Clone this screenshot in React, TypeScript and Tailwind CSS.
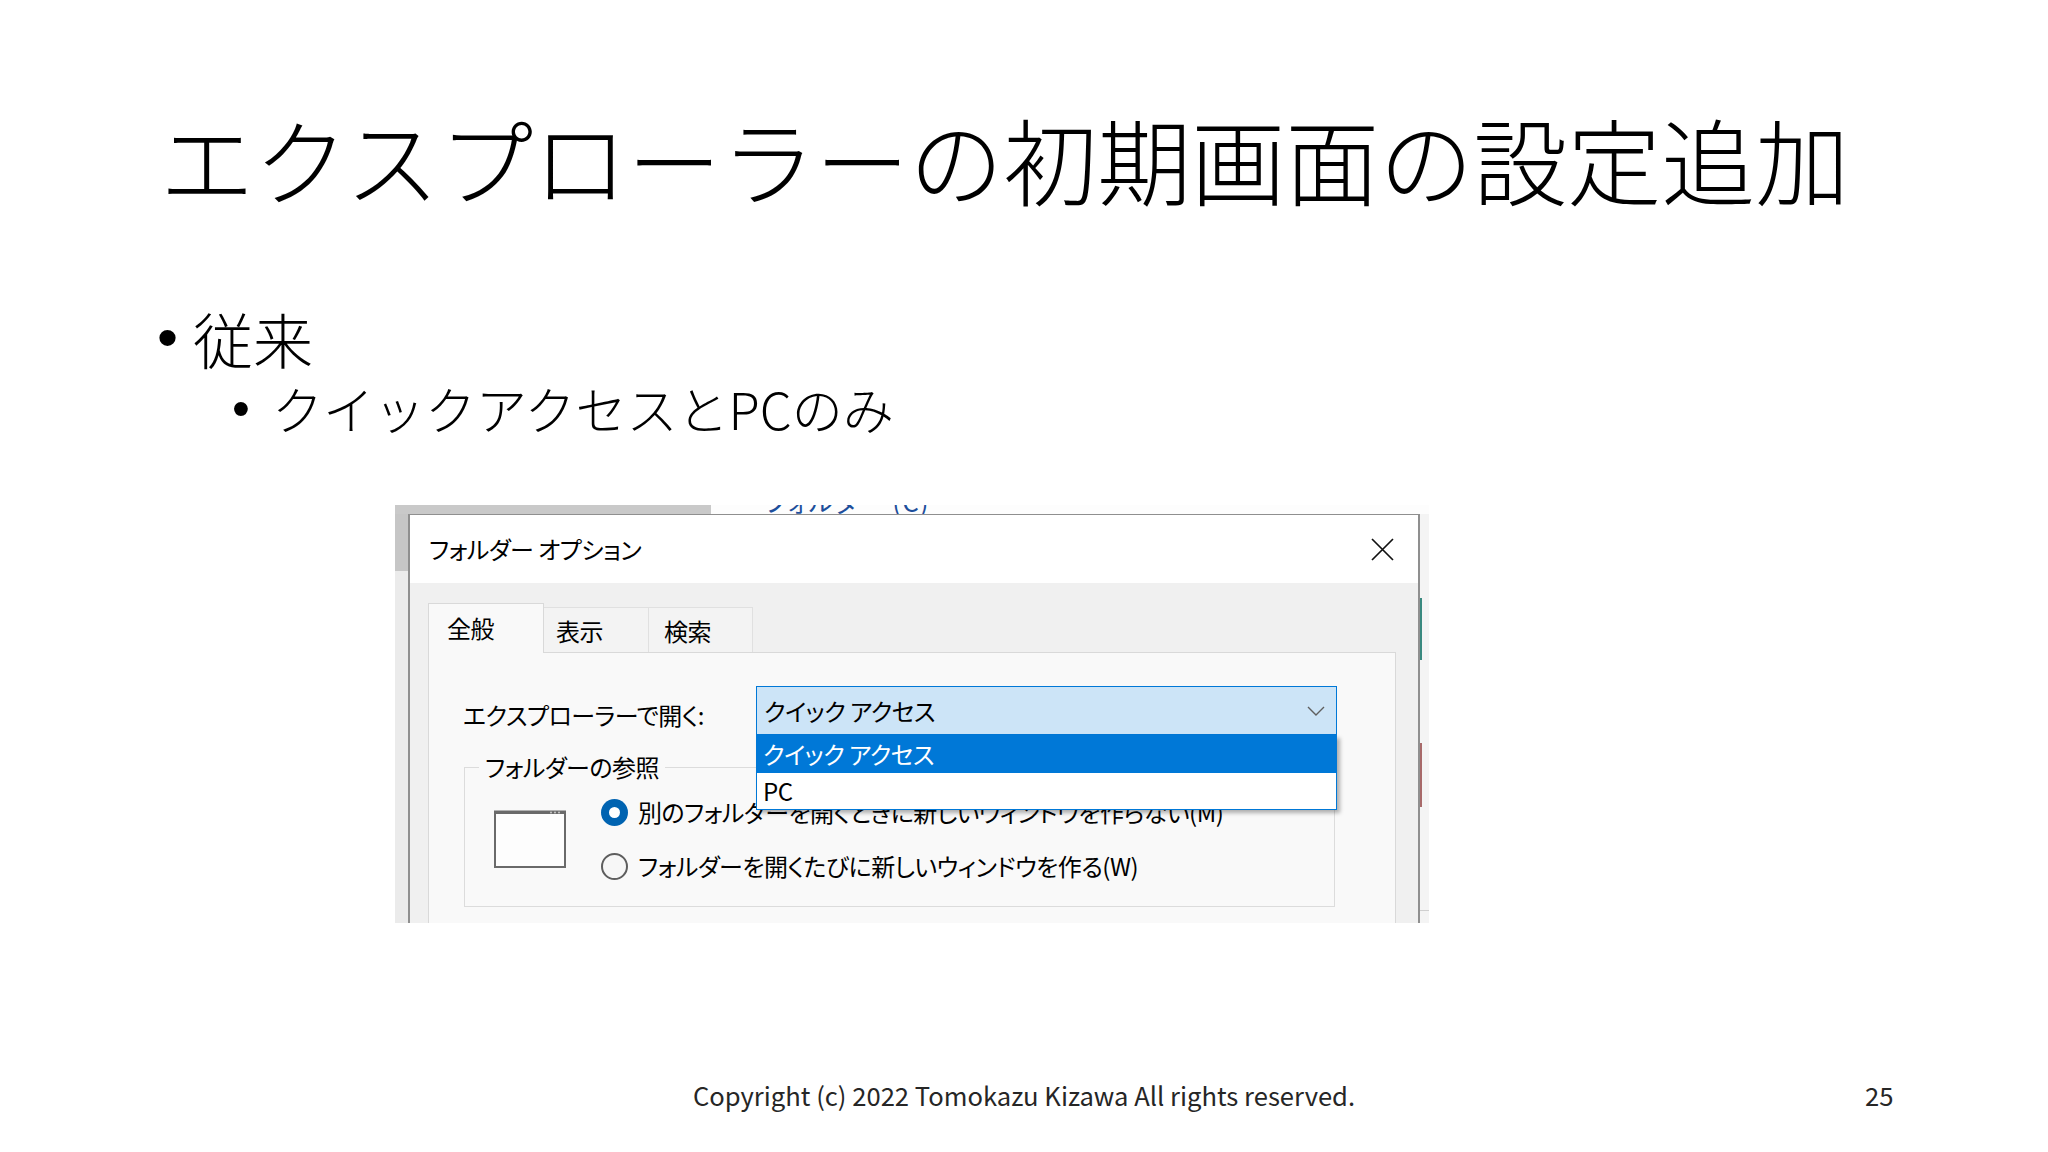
import React from "react";

function CloseIcon() {
  return (
    <svg width="23" height="23" viewBox="0 0 23 23" fill="none">
      <path d="M1 1L22 22M22 1L1 22" stroke="#111" strokeWidth="1.7" />
    </svg>
  );
}

function Chevron() {
  return (
    <svg width="18" height="10" viewBox="0 0 18 10" fill="none">
      <path d="M1 1L9 9L17 1" stroke="#5f5f5f" strokeWidth="1.4" />
    </svg>
  );
}

function WindowIcon() {
  return (
    <svg width="72" height="58" viewBox="0 0 72 58" fill="none">
      <rect x="1" y="1.5" width="70" height="55.5" fill="#fdfdfd" stroke="#6a6a6a" strokeWidth="2" />
      <path d="M1 2.5H71" stroke="#6a6a6a" strokeWidth="3" />
      <circle cx="57" cy="2.5" r="1" fill="#c8c8c8" />
      <circle cx="61" cy="2.5" r="1" fill="#c8c8c8" />
      <circle cx="65" cy="2.5" r="1" fill="#c8c8c8" />
    </svg>
  );
}

function FolderOptions() {
  return (
    <div className="ml-[395px] mt-[71px] w-[1034px] h-[418px] shrink-0 overflow-hidden flex flex-col bg-[#f3f3f3] text-[24px] leading-[30px] tracking-[-0.5px] [font-feature-settings:'palt']">
      {/* strip of the window behind the dialog */}
      <div className="h-[9px] flex shrink-0">
        <div className="w-[316px] bg-[#c9c9c9]" />
        <div className="flex-1 bg-[#fdfdfd] overflow-hidden pl-[20px]">
          <div className="-mt-[19px] text-[26px] leading-[30px] tracking-[1px] text-[#1d4f9c] whitespace-nowrap">
            ‥ フォルダー (C)
          </div>
        </div>
      </div>

      <div className="flex flex-1 min-h-0">
        <div className="w-[13px] flex flex-col shrink-0">
          <div className="h-[57px] bg-[#c6c6c6]" />
          <div className="flex-1 bg-[#ebebeb]" />
        </div>

        {/* dialog */}
        <div className="w-[1012px] shrink-0 flex flex-col border-x-2 border-t border-[#8f8f8f] bg-[#f0f0f0]">
          <div className="h-[68px] shrink-0 bg-white flex items-center justify-between pl-[19px] pr-[24px]">
            <span>フォルダー オプション</span>
            <CloseIcon />
          </div>

          <div className="flex-1 flex flex-col pl-[18px] pr-[22px] pt-[20px]">
            {/* tabs */}
            <div className="flex items-end h-[49px] shrink-0">
              <div className="relative z-10 -mb-px w-[116px] h-[50px] border border-b-0 border-[#d9d9d9] bg-[#f9f9f9] pl-[18px] pt-[9px]">
                全般
              </div>
              <div className="w-[105px] h-[45px] border border-b-0 border-l-0 border-[#e0e0e0] bg-[#f3f3f3] pl-[12px] pt-[8px]">
                表示
              </div>
              <div className="w-[104px] h-[45px] border border-b-0 border-l-0 border-[#e0e0e0] bg-[#f3f3f3] pl-[15px] pt-[8px]">
                検索
              </div>
            </div>

            {/* tab panel */}
            <div className="h-[320px] shrink-0 border border-[#d9d9d9] bg-[#f9f9f9] pl-[34px] pt-[33px]">
              <div className="flex items-start">
                <div className="w-[293px] mt-[14px] whitespace-nowrap">エクスプローラーで開く:</div>
                <div className="relative w-[581px]">
                  <div className="h-[49px] border border-[#0078d7] bg-[#cce4f7] flex items-center justify-between pl-[7px] pr-[11px]">
                    <span>クイック アクセス</span>
                    <Chevron />
                  </div>
                  <div className="absolute z-20 left-0 top-full w-full flex flex-col border-x border-b border-[#0078d7] bg-white shadow-[3px_3px_4px_rgba(0,0,0,0.3)]">
                    <div className="h-[38px] bg-[#0078d7] text-white pl-[6px] flex items-center">クイック アクセス</div>
                    <div className="h-[36px] pl-[6px] flex items-center">PC</div>
                  </div>
                </div>
              </div>

              <fieldset className="mt-[17px] ml-px w-[871px] h-[155px] border border-[#dcdcdc]">
                <legend className="ml-[14px] px-[6px]">フォルダーの参照</legend>
                <div className="flex items-center pl-[29px] pt-[15px]">
                  <WindowIcon />
                  <div className="ml-[35px] flex flex-col gap-[24px]">
                    <div className="flex items-center gap-[10px]">
                      <div className="w-[27px] h-[27px] rounded-full bg-[#0063b1] flex items-center justify-center">
                        <div className="w-[11px] h-[11px] rounded-full bg-white" />
                      </div>
                      <span className="whitespace-nowrap">別のフォルダーを開くときに新しいウィンドウを作らない(M)</span>
                    </div>
                    <div className="flex items-center gap-[10px]">
                      <div className="w-[27px] h-[27px] rounded-full border-2 border-[#5e5e5e] bg-[#f7f7f7]" />
                      <span className="whitespace-nowrap">フォルダーを開くたびに新しいウィンドウを作る(W)</span>
                    </div>
                  </div>
                </div>
              </fieldset>
            </div>
          </div>
        </div>

        {/* edge of the window behind */}
        <div className="flex-1 flex flex-col bg-[#f4f4f4]">
          <div className="h-[84px]" />
          <div className="h-[62px] w-[2px] bg-[#3a8a80]" />
          <div className="h-[83px]" />
          <div className="h-[64px] w-[2px] bg-[#a86a6a]" />
          <div className="h-[103px]" />
          <div className="h-px bg-[#cfcfcf]" />
        </div>
      </div>
    </div>
  );
}

export default function App() {
  return (
    <div className="w-[2048px] h-[1152px] bg-white overflow-hidden flex flex-col text-black font-['Noto_Sans_CJK_JP',sans-serif]">
      <h1 className="mt-[111px] ml-[160px] text-[94px] leading-none font-light whitespace-nowrap">
        エクスプローラーの初期画面の設定追加
      </h1>

      <div className="mt-[103px] ml-[157px] flex items-center text-[60px] leading-none font-light">
        <span className="w-[36px] font-['Liberation_Sans',sans-serif]">•</span>
        <span>従来</span>
      </div>

      <div className="mt-[15px] ml-[232px] flex items-center text-[51px] leading-none font-light whitespace-nowrap">
        <span className="w-[40px] font-['Liberation_Sans',sans-serif]">•</span>
        <span>クイックアクセスとPCのみ</span>
      </div>

      <FolderOptions />

      <div className="mt-[159px] flex items-center text-[25.6px] leading-none text-[#262626]">
        <div className="w-[512px]" />
        <div className="w-[1024px] text-center">Copyright (c) 2022 Tomokazu Kizawa All rights reserved.</div>
        <div className="pl-[329px]">25</div>
      </div>
    </div>
  );
}
